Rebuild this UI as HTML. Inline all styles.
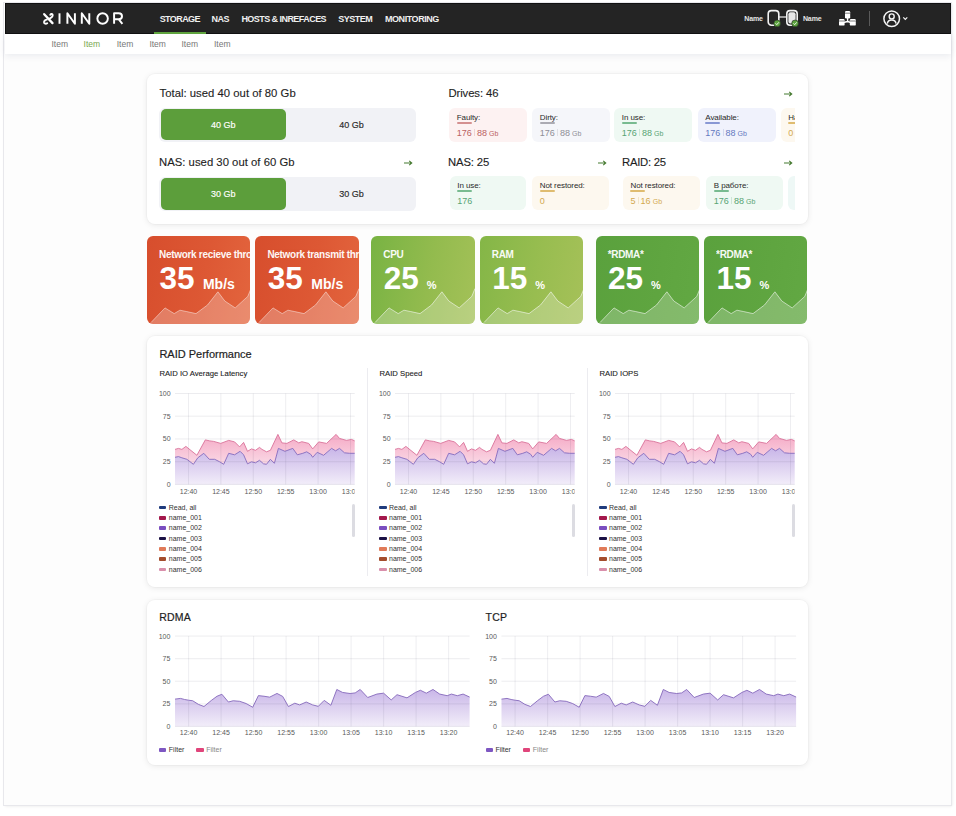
<!DOCTYPE html>
<html><head><meta charset="utf-8">
<style>
*{box-sizing:border-box;margin:0;padding:0}
html,body{width:956px;height:816px;overflow:hidden;background:#fff;font-family:"Liberation Sans",sans-serif;color:#222}
.frame{position:absolute;left:4px;top:3px;width:947px;height:802px;background:#fdfdfd;box-shadow:0 0 0 1px #e8e8ec, 1px 1px 3px rgba(0,0,0,0.10)}
.hdr{position:absolute;left:4.5px;top:3px;width:946px;height:30.5px;background:#242424;border:1px solid #111}
.sub{position:absolute;left:4.5px;top:33.5px;width:946px;height:20.5px;background:#fff;box-shadow:0 2px 7px rgba(40,50,90,0.085)}
.nav{position:absolute;top:13.6px;font-size:9px;font-weight:bold;color:#f0f0f0;white-space:nowrap;line-height:10px}
.it{position:absolute;top:38.5px;font-size:8.5px;color:#777;line-height:10px}
.card{position:absolute;background:#fff;border-radius:8px;box-shadow:0 0 0 1px rgba(0,0,0,0.02),0 1px 6px rgba(0,0,0,0.085)}
.t12{position:absolute;font-size:11.3px;line-height:14px;color:#1e1e1e;white-space:nowrap;letter-spacing:0.02px;-webkit-text-stroke:0.12px #1e1e1e}
.bar{position:absolute;background:#f1f2f6;border-radius:6px}
.gbar{position:absolute;background:#5c9e3b;border-radius:5px;color:#fff;font-size:9px;text-align:center;-webkit-text-stroke:0.15px #fff}
.btx{position:absolute;font-size:9px;color:#2a2a2a;line-height:10px;white-space:nowrap;-webkit-text-stroke:0.15px #2a2a2a}
.ab{position:absolute;line-height:0}
.sc{position:absolute;height:33.5px;border-radius:6px;overflow:hidden}
.clip{position:absolute;overflow:hidden}
.sl{position:absolute;left:7.8px;top:4.6px;font-size:8px;line-height:9px;color:#2a2a2a;white-space:nowrap;letter-spacing:-0.1px}
.su{position:absolute;left:7.8px;top:14px;width:15px;height:1.6px;border-radius:1px}
.sv{position:absolute;left:7.8px;top:19.5px;font-size:9px;line-height:11px;white-space:nowrap;letter-spacing:0}
.sv .gb{font-size:7px;margin-left:2.2px;letter-spacing:0}
.sep{display:inline-block;width:0.7px;height:7px;background:currentColor;opacity:0.22;margin:0 2.2px;vertical-align:-0.5px}
.mc{position:absolute;top:236px;width:103.42px;height:88px;border-radius:6px;overflow:hidden;color:#fff}
.mc .sp{position:absolute;left:0;top:0}
.mt{position:absolute;left:12px;top:12.5px;font-size:10px;font-weight:bold;white-space:nowrap;line-height:11px;opacity:0.95;letter-spacing:-0.3px}
.mn{position:absolute;left:12.4px;top:24.6px;font-size:31.5px;font-weight:bold;white-space:nowrap;line-height:34px}
.mn .u{font-size:14px;margin-left:8.5px}
.mn .pc{font-size:11px;margin-left:8px}
.h11{position:absolute;font-size:11px;line-height:13px;color:#1e1e1e;white-space:nowrap;-webkit-text-stroke:0.2px #1e1e1e}
.ct{position:absolute;top:368.5px;font-size:7.7px;line-height:9px;color:#222;white-space:nowrap;-webkit-text-stroke:0.1px #222}
.dv{position:absolute;top:368px;width:1px;height:208px;background:#ececf0}
.lg{position:absolute;font-size:7px;line-height:10px;color:#333;white-space:nowrap;padding-left:9.6px}
.lg i{position:absolute;left:0;top:3.2px;width:7.3px;height:3.6px;border-radius:1px}
.sb{position:absolute;width:3.4px;height:33px;background:#dcdce2;border-radius:2px}
svg.charts{position:absolute;left:0;top:0}
.ax{font-size:7px;fill:#5a5a5a;font-family:"Liberation Sans",sans-serif}
</style></head><body>
<div class="frame"></div>
<div class="hdr"></div>
<div class="sub"></div>
<svg style="position:absolute;left:0;top:0" width="130" height="34" viewBox="0 0 130 34">
<g fill="none" stroke="#fff" stroke-width="1.95" stroke-linejoin="round">
<path d="M44.2 14.2L52.5 23.1" stroke-width="2.3" stroke-linecap="round"/>
<path d="M50.3 14.8C50.6 13.9 52 13.6 52.5 14.5C53 15.6 52.3 17.4 49.9 18.3" stroke-linecap="round"/>
<path d="M46.8 19.6C45 19.9 44 20.9 44.1 22.4C44.3 23.9 46 24 47.2 23.2" stroke-linecap="round"/>
<path d="M59.5 13.3V23.8"/>
<path d="M67.4 23.8V13.3L74.9 23.8V13.3"/>
<path d="M81.8 23.8V13.3L89.3 23.8V13.3"/>
<circle cx="102.6" cy="18.5" r="5.25"/>
<path d="M114.1 23.8V13.3H118.6C120.8 13.3 122 14.5 122 16.3C122 18.1 120.8 19.3 118.6 19.3H114.1M118.8 19.3L122.4 23.8"/>
</g></svg>
<div class="nav" style="left:159.7px;letter-spacing:-0.6px">STORAGE</div>
<div class="nav" style="left:211.5px;letter-spacing:-0.5px">NAS</div>
<div class="nav" style="left:241.4px;letter-spacing:-0.55px">HOSTS &amp; INREFACES</div>
<div class="nav" style="left:338.2px;letter-spacing:-0.5px">SYSTEM</div>
<div class="nav" style="left:385px;letter-spacing:-0.45px">MONITORING</div>
<div style="position:absolute;left:154px;top:31.6px;width:51.7px;height:2px;background:#5fa43e"></div>
<div style="position:absolute;left:744.2px;top:15.3px;font-size:7px;line-height:8px;color:#e6e6e6;font-weight:bold;letter-spacing:-0.1px">Name</div>
<div style="position:absolute;left:802.9px;top:15.3px;font-size:7px;line-height:8px;color:#e6e6e6;font-weight:bold;letter-spacing:-0.1px">Name</div>
<svg style="position:absolute;left:765px;top:8px" width="36" height="22" viewBox="0 0 36 22">
<rect x="3.2" y="2.6" width="10.6" height="14.6" rx="3.2" fill="#262626" stroke="#f2f2f2" stroke-width="1.6"/>
<path d="M13.8 9H21.2" stroke="#f2f2f2" stroke-width="1.2"/>
<rect x="21.8" y="2.6" width="10.4" height="14.6" rx="3.2" fill="#262626" stroke="#f2f2f2" stroke-width="1.6"/>
<rect x="23.4" y="4.2" width="7.2" height="11.4" rx="2" fill="#e8e8e8"/>
<circle cx="12.2" cy="15.4" r="3.4" fill="#5ba23d" stroke="#262626" stroke-width="0.6"/>
<path d="M10.6 15.4L11.8 16.6L13.9 14.3" stroke="#fff" stroke-width="0.9" fill="none"/>
<circle cx="30.1" cy="15.4" r="3.4" fill="#5ba23d" stroke="#262626" stroke-width="0.6"/>
<path d="M28.5 15.4L29.7 16.6L31.8 14.3" stroke="#fff" stroke-width="0.9" fill="none"/>
</svg>
<svg style="position:absolute;left:838px;top:10px" width="19" height="17" viewBox="0 0 19 17">
<rect x="7" y="1" width="5.2" height="7.4" rx="1.2" fill="#fff"/>
<rect x="1" y="9" width="5.6" height="6.6" rx="1.2" fill="#fff"/>
<rect x="11.8" y="9" width="6" height="6.6" rx="1.2" fill="#fff"/>
<path d="M9.6 8V11.5M9.6 11.5L5.5 12.5M9.6 11.5L13 12.5" stroke="#fff" stroke-width="1.4"/>
<path d="M7 3.2H12.2M1 11H6.6M11.8 11H17.8" stroke="#262626" stroke-width="0.6"/>
</svg>
<div style="position:absolute;left:869px;top:10.6px;width:1px;height:15.6px;background:#5a5a5a"></div>
<svg style="position:absolute;left:882px;top:9px" width="28" height="20" viewBox="0 0 28 20">
<circle cx="9.7" cy="9.7" r="7.8" fill="none" stroke="#f4f4f4" stroke-width="1.5"/>
<circle cx="9.7" cy="7.4" r="2.5" fill="none" stroke="#f4f4f4" stroke-width="1.4"/>
<path d="M5.3 14.6C5.8 11.9 7.5 11 9.7 11C11.9 11 13.6 11.9 14.1 14.6" fill="none" stroke="#f4f4f4" stroke-width="1.4"/>
<path d="M21.3 8.4L23.3 10.4L25.3 8.4" fill="none" stroke="#f4f4f4" stroke-width="1.2"/>
</svg>
<div class="it" style="left:51.5px">Item</div>
<div class="it" style="left:83.6px;color:#79a84f">Item</div>
<div class="it" style="left:116.7px">Item</div>
<div class="it" style="left:149.4px">Item</div>
<div class="it" style="left:181.5px">Item</div>
<div class="it" style="left:214px">Item</div>

<div class="card" style="left:147px;top:74px;width:660.5px;height:150px"></div>
<div class="t12" style="left:159.5px;top:86px">Total: used 40 out of 80 Gb</div>
<div class="bar" style="left:159px;top:107.5px;width:256.5px;height:34.5px"></div>
<div class="gbar" style="left:160.5px;top:109px;width:125.5px;height:31.4px;line-height:32.5px">40 Gb</div>
<div class="btx" style="left:331.5px;top:120.3px;width:40px;text-align:center">40 Gb</div>
<div class="t12" style="left:159px;top:155px">NAS: used 30 out of 60 Gb</div>
<div class="ab" style="left:403.5px;top:159.8px"><svg width="9" height="6" viewBox="0 0 9 6"><path d="M0 3H7.5M5.2 0.8L7.8 3L5.2 5.2" fill="none" stroke="#457a30" stroke-width="1.05"/></svg></div>
<div class="bar" style="left:159px;top:177px;width:256.5px;height:34.3px"></div>
<div class="gbar" style="left:160.5px;top:178.2px;width:125.5px;height:31.4px;line-height:32.5px">30 Gb</div>
<div class="btx" style="left:331.5px;top:189.3px;width:40px;text-align:center">30 Gb</div>

<div class="t12" style="left:448.4px;top:86px;letter-spacing:-0.08px">Drives: 46</div>
<div class="ab" style="left:783.5px;top:90.5px"><svg width="9" height="6" viewBox="0 0 9 6"><path d="M0 3H7.5M5.2 0.8L7.8 3L5.2 5.2" fill="none" stroke="#457a30" stroke-width="1.05"/></svg></div>
<div class="clip" style="left:440px;top:100px;width:355px;height:50px"><div style="position:absolute;left:-440px;top:-100px">
<div class="sc" style="left:449px;top:108.2px;width:78px;background:#fdf2f2"><div class="sl">Faulty:</div><div class="su" style="background:#d49090"></div><div class="sv" style="color:#bb6262">176<i class="sep"></i>88<span class="gb">Gb</span></div></div>
<div class="sc" style="left:532px;top:108.2px;width:77.5px;background:#f5f6fa"><div class="sl">Dirty:</div><div class="su" style="background:#ababb3"></div><div class="sv" style="color:#8e8e96">176<i class="sep"></i>88<span class="gb">Gb</span></div></div>
<div class="sc" style="left:614px;top:108.2px;width:78px;background:#eff9f3"><div class="sl">In use:</div><div class="su" style="background:#78bb90"></div><div class="sv" style="color:#58a474">176<i class="sep"></i>88<span class="gb">Gb</span></div></div>
<div class="sc" style="left:697.5px;top:108.2px;width:78px;background:#f0f2fc"><div class="sl">Available:</div><div class="su" style="background:#8998d4"></div><div class="sv" style="color:#6479c0">176<i class="sep"></i>88<span class="gb">Gb</span></div></div>
<div class="sc" style="left:780.5px;top:108.2px;width:78px;background:#fdf8ef"><div class="sl">Hardware:</div><div class="su" style="background:#dfbc70"></div><div class="sv" style="color:#d3a94f">0<i class="sep"></i>0<span class="gb">Gb</span></div></div>
</div></div>
<div class="t12" style="left:448px;top:155px;letter-spacing:-0.15px">NAS: 25</div>
<div class="ab" style="left:597.5px;top:159.8px"><svg width="9" height="6" viewBox="0 0 9 6"><path d="M0 3H7.5M5.2 0.8L7.8 3L5.2 5.2" fill="none" stroke="#457a30" stroke-width="1.05"/></svg></div>
<div class="t12" style="left:622px;top:155px;letter-spacing:-0.25px">RAID: 25</div>
<div class="ab" style="left:783.5px;top:159.8px"><svg width="9" height="6" viewBox="0 0 9 6"><path d="M0 3H7.5M5.2 0.8L7.8 3L5.2 5.2" fill="none" stroke="#457a30" stroke-width="1.05"/></svg></div>
<div class="clip" style="left:440px;top:170px;width:355px;height:50px"><div style="position:absolute;left:-440px;top:-170px">
<div class="sc" style="left:449.5px;top:176.4px;width:76.5px;background:#eff9f3"><div class="sl">In use:</div><div class="su" style="background:#78bb90"></div><div class="sv" style="color:#58a474">176</div></div>
<div class="sc" style="left:532px;top:176.4px;width:77px;background:#fdf8ef"><div class="sl">Not restored:</div><div class="su" style="background:#dfbc70"></div><div class="sv" style="color:#d3a94f">0</div></div>
<div class="sc" style="left:622.7px;top:176.4px;width:77.3px;background:#fdf8ef"><div class="sl">Not restored:</div><div class="su" style="background:#dfbc70"></div><div class="sv" style="color:#d3a94f">5<i class="sep"></i>16<span class="gb">Gb</span></div></div>
<div class="sc" style="left:706px;top:176.4px;width:76.5px;background:#eff9f3"><div class="sl">В работе:</div><div class="su" style="background:#78bb90"></div><div class="sv" style="color:#58a474">176<i class="sep"></i>88<span class="gb">Gb</span></div></div>
<div class="sc" style="left:788px;top:176.4px;width:78px;background:#eef8f6"><div class="sl">In use:</div><div class="su" style="background:#78bb90"></div><div class="sv" style="color:#58a474">176</div></div>
</div></div>

<div class="mc" style="left:147px;background:linear-gradient(100deg,#d74e2d 0%,#dd5834 55%,#e3653e 100%)"><svg class="sp" width="104" height="88" viewBox="0 0 104 88"><polygon points="0,88 4.2,86.3 18,71.9 27.2,77.6 32.9,74.2 39.8,75.6 49,77.6 60.5,69 70.9,55.8 77.8,65 88.2,71.9 100.8,60.4 104,52.5 104,88" fill="rgba(255,255,255,0.25)"/><polyline points="4.2,86.3 18,71.9 27.2,77.6 32.9,74.2 39.8,75.6 49,77.6 60.5,69 70.9,55.8 77.8,65 88.2,71.9 100.8,60.4 104,52.5" fill="none" stroke="rgba(255,255,255,0.45)" stroke-width="1"/></svg><div class="mt">Network recieve throughput</div><div class="mn">35<span class="u">Mb/s</span></div></div>
<div class="mc" style="left:255.42px;background:linear-gradient(100deg,#d74e2d 0%,#dd5834 55%,#e3653e 100%)"><svg class="sp" width="104" height="88" viewBox="0 0 104 88"><polygon points="0,88 4.2,86.3 18,71.9 27.2,77.6 32.9,74.2 39.8,75.6 49,77.6 60.5,69 70.9,55.8 77.8,65 88.2,71.9 100.8,60.4 104,52.5 104,88" fill="rgba(255,255,255,0.25)"/><polyline points="4.2,86.3 18,71.9 27.2,77.6 32.9,74.2 39.8,75.6 49,77.6 60.5,69 70.9,55.8 77.8,65 88.2,71.9 100.8,60.4 104,52.5" fill="none" stroke="rgba(255,255,255,0.45)" stroke-width="1"/></svg><div class="mt">Network transmit throughput</div><div class="mn">35<span class="u">Mb/s</span></div></div>
<div class="mc" style="left:371.33px;background:linear-gradient(100deg,#78b343 0%,#93bb4e 55%,#a4c158 100%)"><svg class="sp" width="104" height="88" viewBox="0 0 104 88"><polygon points="0,88 4.2,86.3 18,71.9 27.2,77.6 32.9,74.2 39.8,75.6 49,77.6 60.5,69 70.9,55.8 77.8,65 88.2,71.9 100.8,60.4 104,52.5 104,88" fill="rgba(255,255,255,0.24)"/><polyline points="4.2,86.3 18,71.9 27.2,77.6 32.9,74.2 39.8,75.6 49,77.6 60.5,69 70.9,55.8 77.8,65 88.2,71.9 100.8,60.4 104,52.5" fill="none" stroke="rgba(255,255,255,0.55)" stroke-width="1"/></svg><div class="mt">CPU</div><div class="mn">25<span class="u pc">%</span></div></div>
<div class="mc" style="left:479.75px;background:linear-gradient(100deg,#84b647 0%,#98bd50 55%,#a6c159 100%)"><svg class="sp" width="104" height="88" viewBox="0 0 104 88"><polygon points="0,88 4.2,86.3 18,71.9 27.2,77.6 32.9,74.2 39.8,75.6 49,77.6 60.5,69 70.9,55.8 77.8,65 88.2,71.9 100.8,60.4 104,52.5 104,88" fill="rgba(255,255,255,0.24)"/><polyline points="4.2,86.3 18,71.9 27.2,77.6 32.9,74.2 39.8,75.6 49,77.6 60.5,69 70.9,55.8 77.8,65 88.2,71.9 100.8,60.4 104,52.5" fill="none" stroke="rgba(255,255,255,0.55)" stroke-width="1"/></svg><div class="mt">RAM</div><div class="mn">15<span class="u pc">%</span></div></div>
<div class="mc" style="left:595.67px;background:linear-gradient(100deg,#5aa13d 0%,#5fa540 60%,#62a843 100%)"><svg class="sp" width="104" height="88" viewBox="0 0 104 88"><polygon points="0,88 4.2,86.3 18,71.9 27.2,77.6 32.9,74.2 39.8,75.6 49,77.6 60.5,69 70.9,55.8 77.8,65 88.2,71.9 100.8,60.4 104,52.5 104,88" fill="rgba(255,255,255,0.22)"/><polyline points="4.2,86.3 18,71.9 27.2,77.6 32.9,74.2 39.8,75.6 49,77.6 60.5,69 70.9,55.8 77.8,65 88.2,71.9 100.8,60.4 104,52.5" fill="none" stroke="rgba(255,255,255,0.55)" stroke-width="1"/></svg><div class="mt">*RDMA*</div><div class="mn">25<span class="u pc">%</span></div></div>
<div class="mc" style="left:704.08px;background:linear-gradient(100deg,#5aa13d 0%,#5fa540 60%,#62a843 100%)"><svg class="sp" width="104" height="88" viewBox="0 0 104 88"><polygon points="0,88 4.2,86.3 18,71.9 27.2,77.6 32.9,74.2 39.8,75.6 49,77.6 60.5,69 70.9,55.8 77.8,65 88.2,71.9 100.8,60.4 104,52.5 104,88" fill="rgba(255,255,255,0.22)"/><polyline points="4.2,86.3 18,71.9 27.2,77.6 32.9,74.2 39.8,75.6 49,77.6 60.5,69 70.9,55.8 77.8,65 88.2,71.9 100.8,60.4 104,52.5" fill="none" stroke="rgba(255,255,255,0.55)" stroke-width="1"/></svg><div class="mt">*RDMA*</div><div class="mn">15<span class="u pc">%</span></div></div>

<div class="card" style="left:147px;top:335.5px;width:660.5px;height:251px"></div>
<div class="h11" style="left:159.4px;top:347.5px">RAID Performance</div>
<div class="ct" style="left:159.4px">RAID IO Average Latency</div>
<div class="ct" style="left:379.5px">RAID Speed</div>
<div class="ct" style="left:599.5px">RAID IOPS</div>
<div class="dv" style="left:367px"></div>
<div class="dv" style="left:587px"></div>
<div class="lg" style="left:159.2px;top:502.6px"><i style="background:#1f3b7d"></i>Read, all</div>
<div class="lg" style="left:159.2px;top:512.92px"><i style="background:#a3184c"></i>name_001</div>
<div class="lg" style="left:159.2px;top:523.24px"><i style="background:#7a4ec0"></i>name_002</div>
<div class="lg" style="left:159.2px;top:533.56px"><i style="background:#1b1145"></i>name_003</div>
<div class="lg" style="left:159.2px;top:543.88px"><i style="background:#e07a58"></i>name_004</div>
<div class="lg" style="left:159.2px;top:554.2px"><i style="background:#a44c2c"></i>name_005</div>
<div class="lg" style="left:159.2px;top:564.52px"><i style="background:#d98fab"></i>name_006</div>
<div class="lg" style="left:379.4px;top:502.6px"><i style="background:#1f3b7d"></i>Read, all</div>
<div class="lg" style="left:379.4px;top:512.92px"><i style="background:#a3184c"></i>name_001</div>
<div class="lg" style="left:379.4px;top:523.24px"><i style="background:#7a4ec0"></i>name_002</div>
<div class="lg" style="left:379.4px;top:533.56px"><i style="background:#1b1145"></i>name_003</div>
<div class="lg" style="left:379.4px;top:543.88px"><i style="background:#e07a58"></i>name_004</div>
<div class="lg" style="left:379.4px;top:554.2px"><i style="background:#a44c2c"></i>name_005</div>
<div class="lg" style="left:379.4px;top:564.52px"><i style="background:#d98fab"></i>name_006</div>
<div class="lg" style="left:599.4px;top:502.6px"><i style="background:#1f3b7d"></i>Read, all</div>
<div class="lg" style="left:599.4px;top:512.92px"><i style="background:#a3184c"></i>name_001</div>
<div class="lg" style="left:599.4px;top:523.24px"><i style="background:#7a4ec0"></i>name_002</div>
<div class="lg" style="left:599.4px;top:533.56px"><i style="background:#1b1145"></i>name_003</div>
<div class="lg" style="left:599.4px;top:543.88px"><i style="background:#e07a58"></i>name_004</div>
<div class="lg" style="left:599.4px;top:554.2px"><i style="background:#a44c2c"></i>name_005</div>
<div class="lg" style="left:599.4px;top:564.52px"><i style="background:#d98fab"></i>name_006</div>
<div class="sb" style="left:351.6px;top:503.5px"></div>
<div class="sb" style="left:571.6px;top:503.5px"></div>
<div class="sb" style="left:791.6px;top:503.5px"></div>

<div class="card" style="left:147px;top:599.7px;width:660.5px;height:165.5px"></div>
<div class="h11" style="left:159.3px;top:611px;font-size:10.5px;letter-spacing:0.2px">RDMA</div>
<div class="h11" style="left:485.6px;top:611px;font-size:10.5px;letter-spacing:0.2px">TCP</div>
<div class="lg" style="left:159px;top:744.5px;padding-left:9.8px"><i style="background:#7e57c2;top:3px;height:4px"></i>Filter</div>
<div class="lg" style="left:196.4px;top:744.5px;padding-left:9.8px;color:#888"><i style="background:#e0457b;top:3px;height:4px"></i>Filter</div>
<div class="lg" style="left:485.6px;top:744.5px;padding-left:9.8px"><i style="background:#7e57c2;top:3px;height:4px"></i>Filter</div>
<div class="lg" style="left:523px;top:744.5px;padding-left:9.8px;color:#888"><i style="background:#e0457b;top:3px;height:4px"></i>Filter</div>

<svg class="charts" width="956" height="816" viewBox="0 0 956 816">
<defs>
<linearGradient id="gpurp" x1="0" y1="0" x2="0" y2="1"><stop offset="0" stop-color="#c9b6e8"/><stop offset="1" stop-color="#f2edf9"/></linearGradient>
<linearGradient id="gpink" x1="0" y1="0" x2="0" y2="1"><stop offset="0" stop-color="#f5aac6"/><stop offset="1" stop-color="#fad9e5"/></linearGradient>
<clipPath id="c1"><rect x="160" y="485" width="194.7" height="15"/></clipPath>
<clipPath id="c2"><rect x="380" y="485" width="194.7" height="15"/></clipPath>
<clipPath id="c3"><rect x="600" y="485" width="194.7" height="15"/></clipPath>
</defs>
<polygon points="175,449.4 178.5,448.4 181.9,449.4 185.9,446.4 196.9,455.3 205.3,439.9 209.8,440.9 213.7,441.4 220.7,443.4 228.7,440.4 234.6,441.9 239.6,446.9 243.6,442.4 247.5,451.3 251.5,448.9 255.5,450.3 259.5,447.4 262,449.4 266.5,451.8 270.4,450.3 277.9,434.4 281.9,442.9 286.9,443.4 293.8,439.9 298.8,442.9 301.8,441.7 308.7,443.4 312.7,448.9 318.7,441.9 326.6,443.4 336.1,434.4 339.5,438.4 346.5,440.4 351.5,439.4 354.7,440.9 354.7,453.3 349.5,453.3 344.5,452.8 339.5,448.4 335.6,450.8 331.6,448.4 323.6,455.3 317.2,452.3 312.7,457.3 310.7,454.3 306.7,451.8 302.8,453.3 297.3,454.8 292.8,448.4 284.9,451.3 278.4,448.4 274.4,463.3 270.4,459.3 266.5,464.3 263.5,463.8 259.5,460.3 255.5,462.8 251.5,461.8 247.5,463.8 243.6,454.8 240.1,451.3 234.6,454.8 228.7,453.3 223.7,464.3 219.7,461.8 214.7,459.3 209.3,459.3 203.8,453.3 197.8,457.8 193.4,464.3 186.9,459.3 181.9,457.8 178.5,456.6 175,457.3" fill="url(#gpink)"/>
<polygon points="175,484.4 175,457.3 178.5,456.6 181.9,457.8 186.9,459.3 193.4,464.3 197.8,457.8 203.8,453.3 209.3,459.3 214.7,459.3 219.7,461.8 223.7,464.3 228.7,453.3 234.6,454.8 240.1,451.3 243.6,454.8 247.5,463.8 251.5,461.8 255.5,462.8 259.5,460.3 263.5,463.8 266.5,464.3 270.4,459.3 274.4,463.3 278.4,448.4 284.9,451.3 292.8,448.4 297.3,454.8 302.8,453.3 306.7,451.8 310.7,454.3 312.7,457.3 317.2,452.3 323.6,455.3 331.6,448.4 335.6,450.8 339.5,448.4 344.5,452.8 349.5,453.3 354.7,453.3 354.7,484.4" fill="url(#gpurp)"/>
<line x1="175" y1="484.4" x2="354.7" y2="484.4" stroke="rgba(60,60,90,0.11)" stroke-width="0.9" opacity="1"/>
<line x1="175" y1="461.67" x2="354.7" y2="461.67" stroke="rgba(60,60,90,0.11)" stroke-width="0.9" opacity="0.85"/>
<line x1="175" y1="438.95" x2="354.7" y2="438.95" stroke="rgba(60,60,90,0.11)" stroke-width="0.9" opacity="0.85"/>
<line x1="175" y1="416.23" x2="354.7" y2="416.23" stroke="rgba(60,60,90,0.11)" stroke-width="0.9" opacity="0.85"/>
<line x1="175" y1="393.5" x2="354.7" y2="393.5" stroke="rgba(60,60,90,0.11)" stroke-width="0.9" opacity="1"/>
<line x1="188.5" y1="393.5" x2="188.5" y2="484.4" stroke="rgba(60,60,90,0.11)" stroke-width="0.9" opacity="0.85"/>
<line x1="220.9" y1="393.5" x2="220.9" y2="484.4" stroke="rgba(60,60,90,0.11)" stroke-width="0.9" opacity="0.85"/>
<line x1="253.3" y1="393.5" x2="253.3" y2="484.4" stroke="rgba(60,60,90,0.11)" stroke-width="0.9" opacity="0.85"/>
<line x1="285.7" y1="393.5" x2="285.7" y2="484.4" stroke="rgba(60,60,90,0.11)" stroke-width="0.9" opacity="0.85"/>
<line x1="318.1" y1="393.5" x2="318.1" y2="484.4" stroke="rgba(60,60,90,0.11)" stroke-width="0.9" opacity="0.85"/>
<line x1="350.5" y1="393.5" x2="350.5" y2="484.4" stroke="rgba(60,60,90,0.11)" stroke-width="0.9" opacity="0.85"/>
<polyline points="175,449.4 178.5,448.4 181.9,449.4 185.9,446.4 196.9,455.3 205.3,439.9 209.8,440.9 213.7,441.4 220.7,443.4 228.7,440.4 234.6,441.9 239.6,446.9 243.6,442.4 247.5,451.3 251.5,448.9 255.5,450.3 259.5,447.4 262,449.4 266.5,451.8 270.4,450.3 277.9,434.4 281.9,442.9 286.9,443.4 293.8,439.9 298.8,442.9 301.8,441.7 308.7,443.4 312.7,448.9 318.7,441.9 326.6,443.4 336.1,434.4 339.5,438.4 346.5,440.4 351.5,439.4 354.7,440.9" fill="none" stroke="#d97199" stroke-width="0.9"/>
<polyline points="175,457.3 178.5,456.6 181.9,457.8 186.9,459.3 193.4,464.3 197.8,457.8 203.8,453.3 209.3,459.3 214.7,459.3 219.7,461.8 223.7,464.3 228.7,453.3 234.6,454.8 240.1,451.3 243.6,454.8 247.5,463.8 251.5,461.8 255.5,462.8 259.5,460.3 263.5,463.8 266.5,464.3 270.4,459.3 274.4,463.3 278.4,448.4 284.9,451.3 292.8,448.4 297.3,454.8 302.8,453.3 306.7,451.8 310.7,454.3 312.7,457.3 317.2,452.3 323.6,455.3 331.6,448.4 335.6,450.8 339.5,448.4 344.5,452.8 349.5,453.3 354.7,453.3" fill="none" stroke="#8568bb" stroke-width="0.9"/>
<text x="170.6" y="486.9" text-anchor="end" class="ax">0</text>
<text x="170.6" y="464.17" text-anchor="end" class="ax">25</text>
<text x="170.6" y="441.45" text-anchor="end" class="ax">50</text>
<text x="170.6" y="418.73" text-anchor="end" class="ax">75</text>
<text x="170.6" y="396" text-anchor="end" class="ax">100</text>
<g clip-path="url(#c1)">
<text x="188.5" y="493.5" text-anchor="middle" class="ax">12:40</text>
<text x="220.9" y="493.5" text-anchor="middle" class="ax">12:45</text>
<text x="253.3" y="493.5" text-anchor="middle" class="ax">12:50</text>
<text x="285.7" y="493.5" text-anchor="middle" class="ax">12:55</text>
<text x="318.1" y="493.5" text-anchor="middle" class="ax">13:00</text>
<text x="350.5" y="493.5" text-anchor="middle" class="ax">13:05</text>
</g>
<polygon points="395,449.4 398.5,448.4 401.9,449.4 405.9,446.4 416.9,455.3 425.3,439.9 429.8,440.9 433.7,441.4 440.7,443.4 448.7,440.4 454.6,441.9 459.6,446.9 463.6,442.4 467.5,451.3 471.5,448.9 475.5,450.3 479.5,447.4 482,449.4 486.5,451.8 490.4,450.3 497.9,434.4 501.9,442.9 506.9,443.4 513.8,439.9 518.8,442.9 521.8,441.7 528.7,443.4 532.7,448.9 538.7,441.9 546.6,443.4 556.1,434.4 559.5,438.4 566.5,440.4 571.5,439.4 574.7,440.9 574.7,453.3 569.5,453.3 564.5,452.8 559.5,448.4 555.6,450.8 551.6,448.4 543.6,455.3 537.2,452.3 532.7,457.3 530.7,454.3 526.7,451.8 522.8,453.3 517.3,454.8 512.8,448.4 504.9,451.3 498.4,448.4 494.4,463.3 490.4,459.3 486.5,464.3 483.5,463.8 479.5,460.3 475.5,462.8 471.5,461.8 467.5,463.8 463.6,454.8 460.1,451.3 454.6,454.8 448.7,453.3 443.7,464.3 439.7,461.8 434.7,459.3 429.3,459.3 423.8,453.3 417.8,457.8 413.4,464.3 406.9,459.3 401.9,457.8 398.5,456.6 395,457.3" fill="url(#gpink)"/>
<polygon points="395,484.4 395,457.3 398.5,456.6 401.9,457.8 406.9,459.3 413.4,464.3 417.8,457.8 423.8,453.3 429.3,459.3 434.7,459.3 439.7,461.8 443.7,464.3 448.7,453.3 454.6,454.8 460.1,451.3 463.6,454.8 467.5,463.8 471.5,461.8 475.5,462.8 479.5,460.3 483.5,463.8 486.5,464.3 490.4,459.3 494.4,463.3 498.4,448.4 504.9,451.3 512.8,448.4 517.3,454.8 522.8,453.3 526.7,451.8 530.7,454.3 532.7,457.3 537.2,452.3 543.6,455.3 551.6,448.4 555.6,450.8 559.5,448.4 564.5,452.8 569.5,453.3 574.7,453.3 574.7,484.4" fill="url(#gpurp)"/>
<line x1="395" y1="484.4" x2="574.7" y2="484.4" stroke="rgba(60,60,90,0.11)" stroke-width="0.9" opacity="1"/>
<line x1="395" y1="461.67" x2="574.7" y2="461.67" stroke="rgba(60,60,90,0.11)" stroke-width="0.9" opacity="0.85"/>
<line x1="395" y1="438.95" x2="574.7" y2="438.95" stroke="rgba(60,60,90,0.11)" stroke-width="0.9" opacity="0.85"/>
<line x1="395" y1="416.23" x2="574.7" y2="416.23" stroke="rgba(60,60,90,0.11)" stroke-width="0.9" opacity="0.85"/>
<line x1="395" y1="393.5" x2="574.7" y2="393.5" stroke="rgba(60,60,90,0.11)" stroke-width="0.9" opacity="1"/>
<line x1="408.5" y1="393.5" x2="408.5" y2="484.4" stroke="rgba(60,60,90,0.11)" stroke-width="0.9" opacity="0.85"/>
<line x1="440.9" y1="393.5" x2="440.9" y2="484.4" stroke="rgba(60,60,90,0.11)" stroke-width="0.9" opacity="0.85"/>
<line x1="473.3" y1="393.5" x2="473.3" y2="484.4" stroke="rgba(60,60,90,0.11)" stroke-width="0.9" opacity="0.85"/>
<line x1="505.7" y1="393.5" x2="505.7" y2="484.4" stroke="rgba(60,60,90,0.11)" stroke-width="0.9" opacity="0.85"/>
<line x1="538.1" y1="393.5" x2="538.1" y2="484.4" stroke="rgba(60,60,90,0.11)" stroke-width="0.9" opacity="0.85"/>
<line x1="570.5" y1="393.5" x2="570.5" y2="484.4" stroke="rgba(60,60,90,0.11)" stroke-width="0.9" opacity="0.85"/>
<polyline points="395,449.4 398.5,448.4 401.9,449.4 405.9,446.4 416.9,455.3 425.3,439.9 429.8,440.9 433.7,441.4 440.7,443.4 448.7,440.4 454.6,441.9 459.6,446.9 463.6,442.4 467.5,451.3 471.5,448.9 475.5,450.3 479.5,447.4 482,449.4 486.5,451.8 490.4,450.3 497.9,434.4 501.9,442.9 506.9,443.4 513.8,439.9 518.8,442.9 521.8,441.7 528.7,443.4 532.7,448.9 538.7,441.9 546.6,443.4 556.1,434.4 559.5,438.4 566.5,440.4 571.5,439.4 574.7,440.9" fill="none" stroke="#d97199" stroke-width="0.9"/>
<polyline points="395,457.3 398.5,456.6 401.9,457.8 406.9,459.3 413.4,464.3 417.8,457.8 423.8,453.3 429.3,459.3 434.7,459.3 439.7,461.8 443.7,464.3 448.7,453.3 454.6,454.8 460.1,451.3 463.6,454.8 467.5,463.8 471.5,461.8 475.5,462.8 479.5,460.3 483.5,463.8 486.5,464.3 490.4,459.3 494.4,463.3 498.4,448.4 504.9,451.3 512.8,448.4 517.3,454.8 522.8,453.3 526.7,451.8 530.7,454.3 532.7,457.3 537.2,452.3 543.6,455.3 551.6,448.4 555.6,450.8 559.5,448.4 564.5,452.8 569.5,453.3 574.7,453.3" fill="none" stroke="#8568bb" stroke-width="0.9"/>
<text x="390.6" y="486.9" text-anchor="end" class="ax">0</text>
<text x="390.6" y="464.17" text-anchor="end" class="ax">25</text>
<text x="390.6" y="441.45" text-anchor="end" class="ax">50</text>
<text x="390.6" y="418.73" text-anchor="end" class="ax">75</text>
<text x="390.6" y="396" text-anchor="end" class="ax">100</text>
<g clip-path="url(#c2)">
<text x="408.5" y="493.5" text-anchor="middle" class="ax">12:40</text>
<text x="440.9" y="493.5" text-anchor="middle" class="ax">12:45</text>
<text x="473.3" y="493.5" text-anchor="middle" class="ax">12:50</text>
<text x="505.7" y="493.5" text-anchor="middle" class="ax">12:55</text>
<text x="538.1" y="493.5" text-anchor="middle" class="ax">13:00</text>
<text x="570.5" y="493.5" text-anchor="middle" class="ax">13:05</text>
</g>
<polygon points="615,449.4 618.5,448.4 621.9,449.4 625.9,446.4 636.9,455.3 645.3,439.9 649.8,440.9 653.7,441.4 660.7,443.4 668.7,440.4 674.6,441.9 679.6,446.9 683.6,442.4 687.5,451.3 691.5,448.9 695.5,450.3 699.5,447.4 702,449.4 706.5,451.8 710.4,450.3 717.9,434.4 721.9,442.9 726.9,443.4 733.8,439.9 738.8,442.9 741.8,441.7 748.7,443.4 752.7,448.9 758.7,441.9 766.6,443.4 776.1,434.4 779.5,438.4 786.5,440.4 791.5,439.4 794.7,440.9 794.7,453.3 789.5,453.3 784.5,452.8 779.5,448.4 775.6,450.8 771.6,448.4 763.6,455.3 757.2,452.3 752.7,457.3 750.7,454.3 746.7,451.8 742.8,453.3 737.3,454.8 732.8,448.4 724.9,451.3 718.4,448.4 714.4,463.3 710.4,459.3 706.5,464.3 703.5,463.8 699.5,460.3 695.5,462.8 691.5,461.8 687.5,463.8 683.6,454.8 680.1,451.3 674.6,454.8 668.7,453.3 663.7,464.3 659.7,461.8 654.7,459.3 649.3,459.3 643.8,453.3 637.8,457.8 633.4,464.3 626.9,459.3 621.9,457.8 618.5,456.6 615,457.3" fill="url(#gpink)"/>
<polygon points="615,484.4 615,457.3 618.5,456.6 621.9,457.8 626.9,459.3 633.4,464.3 637.8,457.8 643.8,453.3 649.3,459.3 654.7,459.3 659.7,461.8 663.7,464.3 668.7,453.3 674.6,454.8 680.1,451.3 683.6,454.8 687.5,463.8 691.5,461.8 695.5,462.8 699.5,460.3 703.5,463.8 706.5,464.3 710.4,459.3 714.4,463.3 718.4,448.4 724.9,451.3 732.8,448.4 737.3,454.8 742.8,453.3 746.7,451.8 750.7,454.3 752.7,457.3 757.2,452.3 763.6,455.3 771.6,448.4 775.6,450.8 779.5,448.4 784.5,452.8 789.5,453.3 794.7,453.3 794.7,484.4" fill="url(#gpurp)"/>
<line x1="615" y1="484.4" x2="794.7" y2="484.4" stroke="rgba(60,60,90,0.11)" stroke-width="0.9" opacity="1"/>
<line x1="615" y1="461.67" x2="794.7" y2="461.67" stroke="rgba(60,60,90,0.11)" stroke-width="0.9" opacity="0.85"/>
<line x1="615" y1="438.95" x2="794.7" y2="438.95" stroke="rgba(60,60,90,0.11)" stroke-width="0.9" opacity="0.85"/>
<line x1="615" y1="416.23" x2="794.7" y2="416.23" stroke="rgba(60,60,90,0.11)" stroke-width="0.9" opacity="0.85"/>
<line x1="615" y1="393.5" x2="794.7" y2="393.5" stroke="rgba(60,60,90,0.11)" stroke-width="0.9" opacity="1"/>
<line x1="628.5" y1="393.5" x2="628.5" y2="484.4" stroke="rgba(60,60,90,0.11)" stroke-width="0.9" opacity="0.85"/>
<line x1="660.9" y1="393.5" x2="660.9" y2="484.4" stroke="rgba(60,60,90,0.11)" stroke-width="0.9" opacity="0.85"/>
<line x1="693.3" y1="393.5" x2="693.3" y2="484.4" stroke="rgba(60,60,90,0.11)" stroke-width="0.9" opacity="0.85"/>
<line x1="725.7" y1="393.5" x2="725.7" y2="484.4" stroke="rgba(60,60,90,0.11)" stroke-width="0.9" opacity="0.85"/>
<line x1="758.1" y1="393.5" x2="758.1" y2="484.4" stroke="rgba(60,60,90,0.11)" stroke-width="0.9" opacity="0.85"/>
<line x1="790.5" y1="393.5" x2="790.5" y2="484.4" stroke="rgba(60,60,90,0.11)" stroke-width="0.9" opacity="0.85"/>
<polyline points="615,449.4 618.5,448.4 621.9,449.4 625.9,446.4 636.9,455.3 645.3,439.9 649.8,440.9 653.7,441.4 660.7,443.4 668.7,440.4 674.6,441.9 679.6,446.9 683.6,442.4 687.5,451.3 691.5,448.9 695.5,450.3 699.5,447.4 702,449.4 706.5,451.8 710.4,450.3 717.9,434.4 721.9,442.9 726.9,443.4 733.8,439.9 738.8,442.9 741.8,441.7 748.7,443.4 752.7,448.9 758.7,441.9 766.6,443.4 776.1,434.4 779.5,438.4 786.5,440.4 791.5,439.4 794.7,440.9" fill="none" stroke="#d97199" stroke-width="0.9"/>
<polyline points="615,457.3 618.5,456.6 621.9,457.8 626.9,459.3 633.4,464.3 637.8,457.8 643.8,453.3 649.3,459.3 654.7,459.3 659.7,461.8 663.7,464.3 668.7,453.3 674.6,454.8 680.1,451.3 683.6,454.8 687.5,463.8 691.5,461.8 695.5,462.8 699.5,460.3 703.5,463.8 706.5,464.3 710.4,459.3 714.4,463.3 718.4,448.4 724.9,451.3 732.8,448.4 737.3,454.8 742.8,453.3 746.7,451.8 750.7,454.3 752.7,457.3 757.2,452.3 763.6,455.3 771.6,448.4 775.6,450.8 779.5,448.4 784.5,452.8 789.5,453.3 794.7,453.3" fill="none" stroke="#8568bb" stroke-width="0.9"/>
<text x="610.6" y="486.9" text-anchor="end" class="ax">0</text>
<text x="610.6" y="464.17" text-anchor="end" class="ax">25</text>
<text x="610.6" y="441.45" text-anchor="end" class="ax">50</text>
<text x="610.6" y="418.73" text-anchor="end" class="ax">75</text>
<text x="610.6" y="396" text-anchor="end" class="ax">100</text>
<g clip-path="url(#c3)">
<text x="628.5" y="493.5" text-anchor="middle" class="ax">12:40</text>
<text x="660.9" y="493.5" text-anchor="middle" class="ax">12:45</text>
<text x="693.3" y="493.5" text-anchor="middle" class="ax">12:50</text>
<text x="725.7" y="493.5" text-anchor="middle" class="ax">12:55</text>
<text x="758.1" y="493.5" text-anchor="middle" class="ax">13:00</text>
<text x="790.5" y="493.5" text-anchor="middle" class="ax">13:05</text>
</g>
<polygon points="175,726.4 175,699.13 180.5,698.41 184.6,699.49 188.6,700.21 192.7,700.75 198.4,704.37 204,706.53 211.3,700.48 217,696.24 221.9,694.25 228.4,702.02 233.2,700.75 239.7,701.3 246.2,703.55 252.7,707.26 258.4,695.61 264,696.24 269.7,697.14 277,693.44 282.7,696.42 288.4,706.53 294.8,703.19 299.7,704.91 306.2,702.02 312.7,704.91 318.3,706.35 324.2,700.39 330.9,705.27 336.8,689.47 342.6,692.45 350.1,693.53 355.2,692.9 360.2,689.47 367.7,697.5 376.9,694.07 383.6,693.17 391.2,699.94 397,694.7 407,697.87 415.4,692.45 420.4,690.28 426.3,693.17 433,689.47 439.7,694.07 447.2,695.7 451.4,694.07 457.3,695.7 463.1,694.07 469.6,697.05 469.6,726.4" fill="url(#gpurp)"/>
<line x1="175" y1="726.4" x2="469.6" y2="726.4" stroke="rgba(60,60,90,0.11)" stroke-width="0.9" opacity="0.9"/>
<line x1="175" y1="703.83" x2="469.6" y2="703.83" stroke="rgba(60,60,90,0.11)" stroke-width="0.9" opacity="0.9"/>
<line x1="175" y1="681.25" x2="469.6" y2="681.25" stroke="rgba(60,60,90,0.11)" stroke-width="0.9" opacity="0.9"/>
<line x1="175" y1="658.67" x2="469.6" y2="658.67" stroke="rgba(60,60,90,0.11)" stroke-width="0.9" opacity="0.9"/>
<line x1="175" y1="636.1" x2="469.6" y2="636.1" stroke="rgba(60,60,90,0.11)" stroke-width="0.9" opacity="0.9"/>
<line x1="188.6" y1="636.1" x2="188.6" y2="726.4" stroke="rgba(60,60,90,0.11)" stroke-width="0.9" opacity="0.85"/>
<line x1="221.1" y1="636.1" x2="221.1" y2="726.4" stroke="rgba(60,60,90,0.11)" stroke-width="0.9" opacity="0.85"/>
<line x1="253.6" y1="636.1" x2="253.6" y2="726.4" stroke="rgba(60,60,90,0.11)" stroke-width="0.9" opacity="0.85"/>
<line x1="286.1" y1="636.1" x2="286.1" y2="726.4" stroke="rgba(60,60,90,0.11)" stroke-width="0.9" opacity="0.85"/>
<line x1="318.6" y1="636.1" x2="318.6" y2="726.4" stroke="rgba(60,60,90,0.11)" stroke-width="0.9" opacity="0.85"/>
<line x1="351.1" y1="636.1" x2="351.1" y2="726.4" stroke="rgba(60,60,90,0.11)" stroke-width="0.9" opacity="0.85"/>
<line x1="383.6" y1="636.1" x2="383.6" y2="726.4" stroke="rgba(60,60,90,0.11)" stroke-width="0.9" opacity="0.85"/>
<line x1="416.1" y1="636.1" x2="416.1" y2="726.4" stroke="rgba(60,60,90,0.11)" stroke-width="0.9" opacity="0.85"/>
<line x1="448.6" y1="636.1" x2="448.6" y2="726.4" stroke="rgba(60,60,90,0.11)" stroke-width="0.9" opacity="0.85"/>
<polyline points="175,699.13 180.5,698.41 184.6,699.49 188.6,700.21 192.7,700.75 198.4,704.37 204,706.53 211.3,700.48 217,696.24 221.9,694.25 228.4,702.02 233.2,700.75 239.7,701.3 246.2,703.55 252.7,707.26 258.4,695.61 264,696.24 269.7,697.14 277,693.44 282.7,696.42 288.4,706.53 294.8,703.19 299.7,704.91 306.2,702.02 312.7,704.91 318.3,706.35 324.2,700.39 330.9,705.27 336.8,689.47 342.6,692.45 350.1,693.53 355.2,692.9 360.2,689.47 367.7,697.5 376.9,694.07 383.6,693.17 391.2,699.94 397,694.7 407,697.87 415.4,692.45 420.4,690.28 426.3,693.17 433,689.47 439.7,694.07 447.2,695.7 451.4,694.07 457.3,695.7 463.1,694.07 469.6,697.05" fill="none" stroke="#8568bb" stroke-width="0.9"/>
<text x="170.4" y="728.9" text-anchor="end" class="ax">0</text>
<text x="170.4" y="706.33" text-anchor="end" class="ax">25</text>
<text x="170.4" y="683.75" text-anchor="end" class="ax">50</text>
<text x="170.4" y="661.17" text-anchor="end" class="ax">75</text>
<text x="170.4" y="638.6" text-anchor="end" class="ax">100</text>
<text x="188.6" y="735.2" text-anchor="middle" class="ax">12:40</text>
<text x="221.1" y="735.2" text-anchor="middle" class="ax">12:45</text>
<text x="253.6" y="735.2" text-anchor="middle" class="ax">12:50</text>
<text x="286.1" y="735.2" text-anchor="middle" class="ax">12:55</text>
<text x="318.6" y="735.2" text-anchor="middle" class="ax">13:00</text>
<text x="351.1" y="735.2" text-anchor="middle" class="ax">13:05</text>
<text x="383.6" y="735.2" text-anchor="middle" class="ax">13:10</text>
<text x="416.1" y="735.2" text-anchor="middle" class="ax">13:15</text>
<text x="448.6" y="735.2" text-anchor="middle" class="ax">13:20</text>
<polygon points="501.5,726.4 501.5,699.13 507,698.41 511.1,699.49 515.1,700.21 519.2,700.75 524.9,704.37 530.5,706.53 537.8,700.48 543.5,696.24 548.4,694.25 554.9,702.02 559.7,700.75 566.2,701.3 572.7,703.55 579.2,707.26 584.9,695.61 590.5,696.24 596.2,697.14 603.5,693.44 609.2,696.42 614.9,706.53 621.3,703.19 626.2,704.91 632.7,702.02 639.2,704.91 644.8,706.35 650.7,700.39 657.4,705.27 663.3,689.47 669.1,692.45 676.6,693.53 681.7,692.9 686.7,689.47 694.2,697.5 703.4,694.07 710.1,693.17 717.7,699.94 723.5,694.7 733.5,697.87 741.9,692.45 746.9,690.28 752.8,693.17 759.5,689.47 766.2,694.07 773.7,695.7 777.9,694.07 783.8,695.7 789.6,694.07 796.1,697.05 796.1,726.4" fill="url(#gpurp)"/>
<line x1="501.5" y1="726.4" x2="796.1" y2="726.4" stroke="rgba(60,60,90,0.11)" stroke-width="0.9" opacity="0.9"/>
<line x1="501.5" y1="703.83" x2="796.1" y2="703.83" stroke="rgba(60,60,90,0.11)" stroke-width="0.9" opacity="0.9"/>
<line x1="501.5" y1="681.25" x2="796.1" y2="681.25" stroke="rgba(60,60,90,0.11)" stroke-width="0.9" opacity="0.9"/>
<line x1="501.5" y1="658.67" x2="796.1" y2="658.67" stroke="rgba(60,60,90,0.11)" stroke-width="0.9" opacity="0.9"/>
<line x1="501.5" y1="636.1" x2="796.1" y2="636.1" stroke="rgba(60,60,90,0.11)" stroke-width="0.9" opacity="0.9"/>
<line x1="515.1" y1="636.1" x2="515.1" y2="726.4" stroke="rgba(60,60,90,0.11)" stroke-width="0.9" opacity="0.85"/>
<line x1="547.6" y1="636.1" x2="547.6" y2="726.4" stroke="rgba(60,60,90,0.11)" stroke-width="0.9" opacity="0.85"/>
<line x1="580.1" y1="636.1" x2="580.1" y2="726.4" stroke="rgba(60,60,90,0.11)" stroke-width="0.9" opacity="0.85"/>
<line x1="612.6" y1="636.1" x2="612.6" y2="726.4" stroke="rgba(60,60,90,0.11)" stroke-width="0.9" opacity="0.85"/>
<line x1="645.1" y1="636.1" x2="645.1" y2="726.4" stroke="rgba(60,60,90,0.11)" stroke-width="0.9" opacity="0.85"/>
<line x1="677.6" y1="636.1" x2="677.6" y2="726.4" stroke="rgba(60,60,90,0.11)" stroke-width="0.9" opacity="0.85"/>
<line x1="710.1" y1="636.1" x2="710.1" y2="726.4" stroke="rgba(60,60,90,0.11)" stroke-width="0.9" opacity="0.85"/>
<line x1="742.6" y1="636.1" x2="742.6" y2="726.4" stroke="rgba(60,60,90,0.11)" stroke-width="0.9" opacity="0.85"/>
<line x1="775.1" y1="636.1" x2="775.1" y2="726.4" stroke="rgba(60,60,90,0.11)" stroke-width="0.9" opacity="0.85"/>
<polyline points="501.5,699.13 507,698.41 511.1,699.49 515.1,700.21 519.2,700.75 524.9,704.37 530.5,706.53 537.8,700.48 543.5,696.24 548.4,694.25 554.9,702.02 559.7,700.75 566.2,701.3 572.7,703.55 579.2,707.26 584.9,695.61 590.5,696.24 596.2,697.14 603.5,693.44 609.2,696.42 614.9,706.53 621.3,703.19 626.2,704.91 632.7,702.02 639.2,704.91 644.8,706.35 650.7,700.39 657.4,705.27 663.3,689.47 669.1,692.45 676.6,693.53 681.7,692.9 686.7,689.47 694.2,697.5 703.4,694.07 710.1,693.17 717.7,699.94 723.5,694.7 733.5,697.87 741.9,692.45 746.9,690.28 752.8,693.17 759.5,689.47 766.2,694.07 773.7,695.7 777.9,694.07 783.8,695.7 789.6,694.07 796.1,697.05" fill="none" stroke="#8568bb" stroke-width="0.9"/>
<text x="496.9" y="728.9" text-anchor="end" class="ax">0</text>
<text x="496.9" y="706.33" text-anchor="end" class="ax">25</text>
<text x="496.9" y="683.75" text-anchor="end" class="ax">50</text>
<text x="496.9" y="661.17" text-anchor="end" class="ax">75</text>
<text x="496.9" y="638.6" text-anchor="end" class="ax">100</text>
<text x="515.1" y="735.2" text-anchor="middle" class="ax">12:40</text>
<text x="547.6" y="735.2" text-anchor="middle" class="ax">12:45</text>
<text x="580.1" y="735.2" text-anchor="middle" class="ax">12:50</text>
<text x="612.6" y="735.2" text-anchor="middle" class="ax">12:55</text>
<text x="645.1" y="735.2" text-anchor="middle" class="ax">13:00</text>
<text x="677.6" y="735.2" text-anchor="middle" class="ax">13:05</text>
<text x="710.1" y="735.2" text-anchor="middle" class="ax">13:10</text>
<text x="742.6" y="735.2" text-anchor="middle" class="ax">13:15</text>
<text x="775.1" y="735.2" text-anchor="middle" class="ax">13:20</text>
</svg>
</body></html>
